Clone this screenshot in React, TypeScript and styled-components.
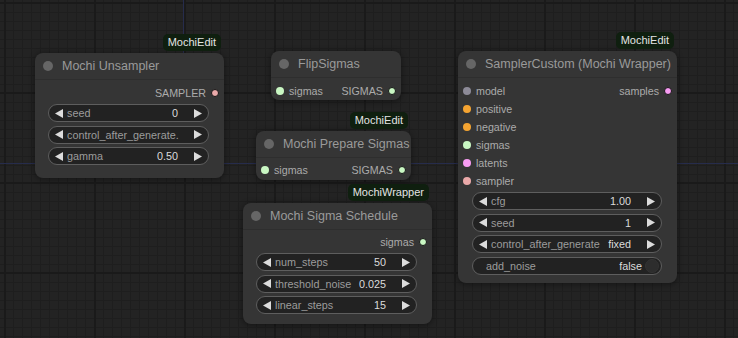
import { ReactNode } from 'react';
import styled, { createGlobalStyle } from 'styled-components';

const GlobalStyle = createGlobalStyle`
  html, body {
    margin: 0;
    padding: 0;
    background: #232323;
  }
  body {
    font-family: 'Liberation Sans', Arial, sans-serif;
  }
`;

const Canvas = styled.div`
  position: relative;
  width: 738px;
  height: 338px;
  overflow: hidden;
  background-color: #232323;
  background-image:
    linear-gradient(to right, #1a1a1a 2px, transparent 2px),
    linear-gradient(to bottom, #1a1a1a 2px, transparent 2px),
    linear-gradient(to right, #1e1e1e 1px, transparent 1px),
    linear-gradient(to bottom, #1e1e1e 1px, transparent 1px);
  background-size: 90px 90px, 90px 90px, 9px 9px, 9px 9px;
  background-position: 4px 2px, 4px 2px, 4px 3px, 4px 3px;
`;

const Links = styled.svg`
  position: absolute;
  left: 0;
  top: 0;
`;

/* nodes sit on a free canvas, so their place is the content */
const Node = styled.div<{ $x: number; $y: number; $w: number; $h: number }>`
  position: absolute;
  left: ${(p) => p.$x}px;
  top: ${(p) => p.$y}px;
  width: ${(p) => p.$w}px;
  height: ${(p) => p.$h}px;
  background: #353535;
  border-radius: 8px;
  box-shadow: 0 1px 6px rgba(0, 0, 0, 0.45);
  display: flex;
  flex-direction: column;
`;

const Badge = styled.div`
  position: absolute;
  right: 3px;
  bottom: calc(100% + 2px);
  height: 17px;
  line-height: 17px;
  padding: 0 5px;
  border-radius: 5px;
  background: #0f1f0f;
  color: #e4e4e4;
  font-size: 11px;
  white-space: nowrap;
`;

const Title = styled.div`
  box-sizing: border-box;
  height: 27px;
  display: flex;
  align-items: center;
  gap: 9px;
  padding-left: 8px;
  border-bottom: 1px solid #2e2e2e;
  color: #9a9a9a;
  font-size: 12.5px;
  white-space: nowrap;
`;

const TitleDot = styled.span`
  width: 10px;
  height: 10px;
  border-radius: 50%;
  background: #666;
  flex-shrink: 0;
`;

const Body = styled.div<{ $pt?: number }>`
  display: flex;
  flex-direction: column;
  padding-top: ${(p) => p.$pt ?? 4}px;
`;

const SlotRow = styled.div`
  display: flex;
  justify-content: space-between;
`;

const SlotColumn = styled.div`
  display: flex;
  flex-direction: column;
`;

const Slot = styled.div<{ $out?: boolean }>`
  height: 18px;
  display: flex;
  align-items: center;
  gap: 5px;
  padding: 0 5px;
  flex-direction: ${(p) => (p.$out ? 'row-reverse' : 'row')};
  margin-left: ${(p) => (p.$out ? 'auto' : '0')};
  color: #ababab;
  font-size: 10.7px;
  white-space: nowrap;
`;

const Dot = styled.span<{ $color: string; $out?: boolean }>`
  box-sizing: border-box;
  width: 8px;
  height: 8px;
  border-radius: 50%;
  background: ${(p) => p.$color};
  border: ${(p) => (p.$out ? '1px solid #151515' : 'none')};
  flex-shrink: 0;
`;

const WidgetList = styled.div<{ $left?: number }>`
  display: flex;
  flex-direction: column;
  gap: 3.5px;
  margin: 2px 15px 0 ${(p) => p.$left ?? 13}px;
`;

const Widget = styled.div`
  box-sizing: border-box;
  height: 18px;
  display: flex;
  align-items: center;
  padding: 0 6px;
  border: 1px solid #5e5e5e;
  border-radius: 9px;
  background: #222;
  font-size: 10.8px;
  white-space: nowrap;
`;

const WidgetLabel = styled.span<{ $plain?: boolean }>`
  color: #9c9c9c;
  margin-left: ${(p) => (p.$plain ? 7 : 4)}px;
  flex: 1;
  overflow: hidden;
`;

const WidgetValue = styled.span<{ $gap?: number }>`
  color: #dcdcdc;
  margin-right: ${(p) => p.$gap ?? 16}px;
`;

const Knob = styled.span`
  box-sizing: border-box;
  width: 14px;
  height: 14px;
  border-radius: 50%;
  background: #2d2d2d;
  border: 1px solid #333;
  margin-right: -4px;
  margin-left: 3px;
`;

function Arrow({ right = false }: { right?: boolean }) {
  return (
    <svg width="8" height="9" viewBox="0 0 8 9">
      <polygon points={right ? '0,0 8,4.5 0,9' : '8,0 0,4.5 8,9'} fill="#dcdcdc" />
    </svg>
  );
}

function NumberWidget({ label, value }: { label: string; value?: string }) {
  return (
    <Widget>
      <Arrow />
      <WidgetLabel>{label}</WidgetLabel>
      {value !== undefined && <WidgetValue>{value}</WidgetValue>}
      <Arrow right />
    </Widget>
  );
}

function ToggleWidget({ label, value }: { label: string; value: string }) {
  return (
    <Widget>
      <WidgetLabel $plain>{label}</WidgetLabel>
      <WidgetValue $gap={0}>{value}</WidgetValue>
      <Knob />
    </Widget>
  );
}

interface GraphNodeProps {
  title: string;
  badge: string;
  x: number;
  y: number;
  w: number;
  h: number;
  children?: ReactNode;
}

function GraphNode({ title, badge, x, y, w, h, children }: GraphNodeProps) {
  return (
    <Node $x={x} $y={y} $w={w} $h={h}>
      {badge && <Badge>{badge}</Badge>}
      <Title>
        <TitleDot />
        {title}
      </Title>
      {children}
    </Node>
  );
}

const SIGMA_GREEN = '#c9f7c3';
const PINK = '#f79cf2';
const SALMON = '#eaa9a9';
const ORANGE = '#f5a431';
const LAVENDER = '#8d8b98';

export default function App() {
  return (
    <>
      <GlobalStyle />
      <Canvas>
        <Links width="738" height="338">
          <line x1="0" y1="163.5" x2="738" y2="163.5" stroke="#262c4c" strokeWidth="1" />
          <line x1="183.5" y1="0" x2="183.5" y2="53" stroke="#262c4c" strokeWidth="1" />
        </Links>

        <GraphNode title="Mochi Unsampler" badge="MochiEdit" x={35} y={53} w={189} h={125}>
          <Body>
            <Slot $out>
              <Dot $color={SALMON} $out />
              SAMPLER
            </Slot>
            <WidgetList>
              <NumberWidget label="seed" value="0" />
              <NumberWidget label="control_after_generate." />
              <NumberWidget label="gamma" value="0.50" />
            </WidgetList>
          </Body>
        </GraphNode>

        <GraphNode title="FlipSigmas" badge="" x={271} y={51} w={130} h={49}>
          <Body>
            <SlotRow>
              <Slot>
                <Dot $color={SIGMA_GREEN} />
                sigmas
              </Slot>
              <Slot $out>
                <Dot $color={SIGMA_GREEN} $out />
                SIGMAS
              </Slot>
            </SlotRow>
          </Body>
        </GraphNode>

        <GraphNode title="Mochi Prepare Sigmas" badge="MochiEdit" x={256} y={131} w={155} h={49}>
          <Body $pt={3}>
            <SlotRow>
              <Slot>
                <Dot $color={SIGMA_GREEN} />
                sigmas
              </Slot>
              <Slot $out>
                <Dot $color={SIGMA_GREEN} $out />
                SIGMAS
              </Slot>
            </SlotRow>
          </Body>
        </GraphNode>

        <GraphNode title="Mochi Sigma Schedule" badge="MochiWrapper" x={243} y={203} w={189} h={121}>
          <Body $pt={3}>
            <Slot $out>
              <Dot $color={SIGMA_GREEN} $out />
              sigmas
            </Slot>
            <WidgetList>
              <NumberWidget label="num_steps" value="50" />
              <NumberWidget label="threshold_noise" value="0.025" />
              <NumberWidget label="linear_steps" value="15" />
            </WidgetList>
          </Body>
        </GraphNode>

        <GraphNode title="SamplerCustom (Mochi Wrapper)" badge="MochiEdit" x={458} y={51} w={219} h={232}>
          <Body>
            <SlotRow>
              <SlotColumn>
                <Slot>
                  <Dot $color={LAVENDER} />
                  model
                </Slot>
                <Slot>
                  <Dot $color={ORANGE} />
                  positive
                </Slot>
                <Slot>
                  <Dot $color={ORANGE} />
                  negative
                </Slot>
                <Slot>
                  <Dot $color={SIGMA_GREEN} />
                  sigmas
                </Slot>
                <Slot>
                  <Dot $color={PINK} />
                  latents
                </Slot>
                <Slot>
                  <Dot $color={SALMON} />
                  sampler
                </Slot>
              </SlotColumn>
              <SlotColumn>
                <Slot $out>
                  <Dot $color={PINK} $out />
                  samples
                </Slot>
              </SlotColumn>
            </SlotRow>
            <WidgetList $left={14}>
              <NumberWidget label="cfg" value="1.00" />
              <NumberWidget label="seed" value="1" />
              <NumberWidget label="control_after_generate" value="fixed" />
              <ToggleWidget label="add_noise" value="false" />
            </WidgetList>
          </Body>
        </GraphNode>
      </Canvas>
    </>
  );
}
